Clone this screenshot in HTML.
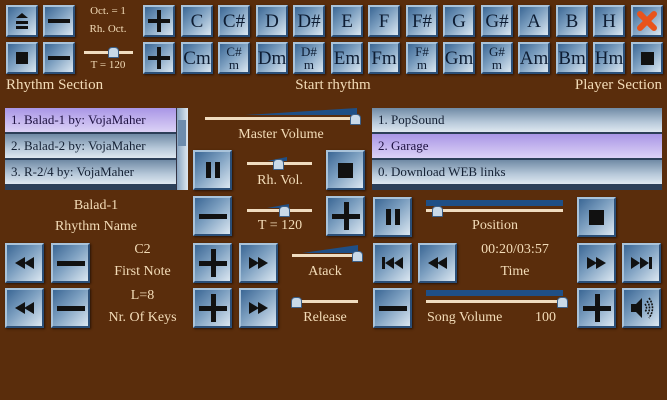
<!DOCTYPE html>
<html><head><meta charset="utf-8"><style>
body{margin:0;width:667px;height:400px;background:#5a2d0c;position:relative;overflow:hidden;font-family:"Liberation Serif",serif;color:#f3dcb8}
.b{position:absolute;box-sizing:border-box;border:2px solid #a9c3da;border-right-color:#2b4f78;border-bottom-color:#2b4f78;background:linear-gradient(135deg,#3b6795 0%,#7c9fc0 45%,#dbe7f1 100%);box-shadow:1px 1px 2px #2a1405;display:flex;align-items:center;justify-content:center;color:#0e1d33;font-size:19px;line-height:1;text-align:center}
.s{width:32px;height:32px}
.L{width:39px;height:40px}
.b.sm{font-size:13px;line-height:13px}
.t{position:absolute;text-align:center;white-space:nowrap}
.sl{position:absolute;height:3px;background:#f0dcc0}
.wd{position:absolute}
.kn{position:absolute;width:9px;height:9px;background:#c9d9e8;border-radius:4px 4px 1px 1px;border:1px solid #3b5f88}
.lst{position:absolute;box-sizing:border-box}
.row{height:24px;border-bottom:2px solid #2c3f58;background:linear-gradient(180deg,#6f8aa5 0%,#b7c9da 60%,#dfe8f0 100%);color:#142033;font-size:13px;line-height:24px;padding-left:6px}
.row.h{background:linear-gradient(180deg,#a996e6,#dcd2f6);color:#1d1140}
</style></head><body>
<div class="b s" style="left:6px;top:5px"><svg width="18" height="20"><polygon points="9,2 15,7 3,7" fill="#111"/><rect x="3" y="10" width="12" height="3" fill="#111"/><rect x="3" y="15" width="12" height="3" fill="#111"/></svg></div>
<div class="b s" style="left:43px;top:5px"><div style="width:22px;height:4px;background:#111"></div></div>
<div class="b s" style="left:6px;top:42px"><div style="width:12px;height:12px;background:#111"></div></div>
<div class="b s" style="left:43px;top:42px"><div style="width:22px;height:4px;background:#111"></div></div>
<div class="t" style="left:80px;width:56px;top:5px;font-size:11px">Oct. = 1</div>
<div class="t" style="left:80px;width:56px;top:23px;font-size:11px">Rh. Oct.</div>
<div class="sl" style="left:84px;top:51px;width:49px"></div>
<div class="kn" style="left:108px;top:47px"></div>
<div class="t" style="left:80px;width:56px;top:59px;font-size:11px">T = 120</div>
<div class="b s" style="left:143px;top:5px"><svg width="24" height="24"><rect x="10" y="1" width="4" height="22" fill="#111"/><rect x="1" y="10" width="22" height="4" fill="#111"/></svg></div>
<div class="b s" style="left:143px;top:42px"><svg width="24" height="24"><rect x="10" y="1" width="4" height="22" fill="#111"/><rect x="1" y="10" width="22" height="4" fill="#111"/></svg></div>
<div class="b s" style="left:181px;top:5px">C</div>
<div class="b s" style="left:218px;top:5px">C#</div>
<div class="b s" style="left:256px;top:5px">D</div>
<div class="b s" style="left:293px;top:5px">D#</div>
<div class="b s" style="left:331px;top:5px">E</div>
<div class="b s" style="left:368px;top:5px">F</div>
<div class="b s" style="left:406px;top:5px">F#</div>
<div class="b s" style="left:443px;top:5px">G</div>
<div class="b s" style="left:481px;top:5px">G#</div>
<div class="b s" style="left:518px;top:5px">A</div>
<div class="b s" style="left:556px;top:5px">B</div>
<div class="b s" style="left:593px;top:5px">H</div>
<div class="b s" style="left:631px;top:5px"><svg width="22" height="22"><path d="M4 4L18 18M18 4L4 18" stroke="#e8541c" stroke-width="6" stroke-linecap="round"/></svg></div>
<div class="b s" style="left:181px;top:42px">Cm</div>
<div class="b s sm" style="left:218px;top:42px">C#<br>m</div>
<div class="b s" style="left:256px;top:42px">Dm</div>
<div class="b s sm" style="left:293px;top:42px">D#<br>m</div>
<div class="b s" style="left:331px;top:42px">Em</div>
<div class="b s" style="left:368px;top:42px">Fm</div>
<div class="b s sm" style="left:406px;top:42px">F#<br>m</div>
<div class="b s" style="left:443px;top:42px">Gm</div>
<div class="b s sm" style="left:481px;top:42px">G#<br>m</div>
<div class="b s" style="left:518px;top:42px">Am</div>
<div class="b s" style="left:556px;top:42px">Bm</div>
<div class="b s" style="left:593px;top:42px">Hm</div>
<div class="b s" style="left:631px;top:42px"><div style="width:13px;height:13px;background:#111"></div></div>
<div class="t" style="left:6px;top:77px;font-size:15px">Rhythm Section</div>
<div class="t" style="left:283px;width:100px;top:77px;font-size:15px">Start rhythm</div>
<div class="t" style="right:5px;top:77px;font-size:15px">Player Section</div>
<div class="lst" style="left:5px;top:108px;width:171px;height:82px;background:#2c3f58;overflow:hidden">
<div class="row h">1. Balad-1 by: VojaMaher</div><div class="row">2. Balad-2 by: VojaMaher</div><div class="row">3. R-2/4 by: VojaMaher</div></div>
<div style="position:absolute;left:176px;top:108px;width:11px;height:82px;background:linear-gradient(90deg,#8aa6c2,#dfe8f0);border-left:1px solid #334"></div>
<div style="position:absolute;left:178px;top:120px;width:8px;height:26px;background:#6d8cad"></div>
<svg class="wd" style="left:205px;top:108px" width="152" height="9"><polygon points="40,7 152,0 152,7" fill="#1f4f86"/></svg>
<div class="sl" style="left:205px;top:117px;width:152px"></div>
<div class="kn" style="left:350px;top:114px"></div>
<div class="t" style="left:205px;width:152px;top:127px;font-size:14px">Master Volume</div>
<div class="b L" style="left:193px;top:150px"><svg width="20" height="20"><rect x="3" y="2" width="5" height="16" fill="#111"/><rect x="12" y="2" width="5" height="16" fill="#111"/></svg></div>
<svg class="wd" style="left:247px;top:155px" width="65" height="7"><polygon points="20,6 40,2 40,6" fill="#1f4f86"/></svg>
<div class="sl" style="left:247px;top:162px;width:65px"></div>
<div class="kn" style="left:273px;top:159px"></div>
<div class="t" style="left:240px;width:80px;top:173px;font-size:14px">Rh. Vol.</div>
<div class="b L" style="left:326px;top:150px"><div style="width:15px;height:15px;background:#111"></div></div>
<div class="b L" style="left:193px;top:196px"><div style="width:28px;height:5px;background:#111"></div></div>
<svg class="wd" style="left:247px;top:202px" width="65" height="7"><polygon points="20,6 42,2 42,6" fill="#1f4f86"/></svg>
<div class="sl" style="left:247px;top:209px;width:65px"></div>
<div class="kn" style="left:279px;top:206px"></div>
<div class="t" style="left:240px;width:80px;top:218px;font-size:14px">T = 120</div>
<div class="b L" style="left:326px;top:196px"><svg width="30" height="30"><rect x="13" y="1" width="5" height="28" fill="#111"/><rect x="1" y="13" width="28" height="5" fill="#111"/></svg></div>
<div class="t" style="left:46px;width:100px;top:198px;font-size:14px">Balad-1</div>
<div class="t" style="left:36px;width:120px;top:219px;font-size:14px">Rhythm Name</div>
<div class="b L" style="left:5px;top:243px"><svg width="22" height="14"><polygon points="1,7 11,1 11,13" fill="#111"/><polygon points="10,7 20,1 20,13" fill="#111"/></svg></div>
<div class="b L" style="left:51px;top:243px"><div style="width:28px;height:5px;background:#111"></div></div>
<div class="t" style="left:95px;width:95px;top:242px;font-size:14px">C2</div>
<div class="t" style="left:95px;width:95px;top:264px;font-size:14px">First Note</div>
<div class="b L" style="left:193px;top:243px"><svg width="30" height="30"><rect x="13" y="1" width="5" height="28" fill="#111"/><rect x="1" y="13" width="28" height="5" fill="#111"/></svg></div>
<div class="b L" style="left:239px;top:243px"><svg width="22" height="14"><polygon points="1,1 11,7 1,13" fill="#111"/><polygon points="10,1 20,7 10,13" fill="#111"/></svg></div>
<svg class="wd" style="left:292px;top:245px" width="66" height="9"><polygon points="10,8 66,0 66,8" fill="#1f4f86"/></svg>
<div class="sl" style="left:292px;top:254px;width:66px"></div>
<div class="kn" style="left:352px;top:251px"></div>
<div class="t" style="left:290px;width:70px;top:264px;font-size:14px">Atack</div>
<div class="b L" style="left:5px;top:288px"><svg width="22" height="14"><polygon points="1,7 11,1 11,13" fill="#111"/><polygon points="10,7 20,1 20,13" fill="#111"/></svg></div>
<div class="b L" style="left:51px;top:288px"><div style="width:28px;height:5px;background:#111"></div></div>
<div class="t" style="left:95px;width:95px;top:288px;font-size:14px">L=8</div>
<div class="t" style="left:95px;width:95px;top:310px;font-size:14px">Nr. Of Keys</div>
<div class="b L" style="left:193px;top:288px"><svg width="30" height="30"><rect x="13" y="1" width="5" height="28" fill="#111"/><rect x="1" y="13" width="28" height="5" fill="#111"/></svg></div>
<div class="b L" style="left:239px;top:288px"><svg width="22" height="14"><polygon points="1,1 11,7 1,13" fill="#111"/><polygon points="10,1 20,7 10,13" fill="#111"/></svg></div>
<div class="sl" style="left:292px;top:300px;width:66px"></div>
<div class="kn" style="left:291px;top:297px"></div>
<div class="t" style="left:290px;width:70px;top:310px;font-size:14px">Release</div>
<div class="lst" style="left:372px;top:108px;width:290px;height:82px;background:#2c3f58;overflow:hidden">
<div class="row">1. PopSound</div><div class="row h">2. Garage</div><div class="row">0. Download WEB links</div></div>
<div class="b L" style="left:373px;top:197px"><svg width="20" height="20"><rect x="3" y="2" width="5" height="16" fill="#111"/><rect x="12" y="2" width="5" height="16" fill="#111"/></svg></div>
<div style="position:absolute;left:426px;top:200px;width:137px;height:6px;background:#1f4f86"></div>
<div class="sl" style="left:426px;top:209px;width:137px"></div>
<div class="kn" style="left:432px;top:206px"></div>
<div class="t" style="left:440px;width:110px;top:218px;font-size:14px">Position</div>
<div class="b L" style="left:577px;top:197px"><div style="width:15px;height:15px;background:#111"></div></div>
<div class="b L" style="left:373px;top:243px"><svg width="24" height="14"><rect x="1" y="1" width="3" height="12" fill="#111"/><polygon points="4,7 13,1 13,13" fill="#111"/><polygon points="13,7 22,1 22,13" fill="#111"/></svg></div>
<div class="b L" style="left:418px;top:243px"><svg width="22" height="14"><polygon points="1,7 11,1 11,13" fill="#111"/><polygon points="10,7 20,1 20,13" fill="#111"/></svg></div>
<div class="t" style="left:460px;width:110px;top:242px;font-size:14px">00:20/03:57</div>
<div class="t" style="left:460px;width:110px;top:264px;font-size:14px">Time</div>
<div class="b L" style="left:577px;top:243px"><svg width="22" height="14"><polygon points="1,1 11,7 1,13" fill="#111"/><polygon points="10,1 20,7 10,13" fill="#111"/></svg></div>
<div class="b L" style="left:622px;top:243px"><svg width="24" height="14"><polygon points="1,1 10,7 1,13" fill="#111"/><polygon points="10,1 19,7 10,13" fill="#111"/><rect x="19" y="1" width="3" height="12" fill="#111"/></svg></div>
<div class="b L" style="left:373px;top:288px"><div style="width:28px;height:5px;background:#111"></div></div>
<div style="position:absolute;left:426px;top:290px;width:137px;height:6px;background:#1f4f86"></div>
<div class="sl" style="left:426px;top:300px;width:137px"></div>
<div class="kn" style="left:557px;top:297px"></div>
<div class="t" style="left:427px;top:310px;font-size:14px">Song Volume</div>
<div class="t" style="left:535px;top:310px;font-size:14px">100</div>
<div class="b L" style="left:577px;top:288px"><svg width="30" height="30"><rect x="13" y="1" width="5" height="28" fill="#111"/><rect x="1" y="13" width="28" height="5" fill="#111"/></svg></div>
<div class="b L" style="left:622px;top:288px"><svg width="26" height="24"><polygon points="2,8 7,8 13,2 13,22 7,16 2,16" fill="#111"/><path d="M16 8Q19 12 16 16M18 5Q23 12 18 19M20 2Q27 12 20 22" stroke="#111" stroke-width="1.6" fill="none" stroke-dasharray="2 1"/></svg></div>
</body></html>
